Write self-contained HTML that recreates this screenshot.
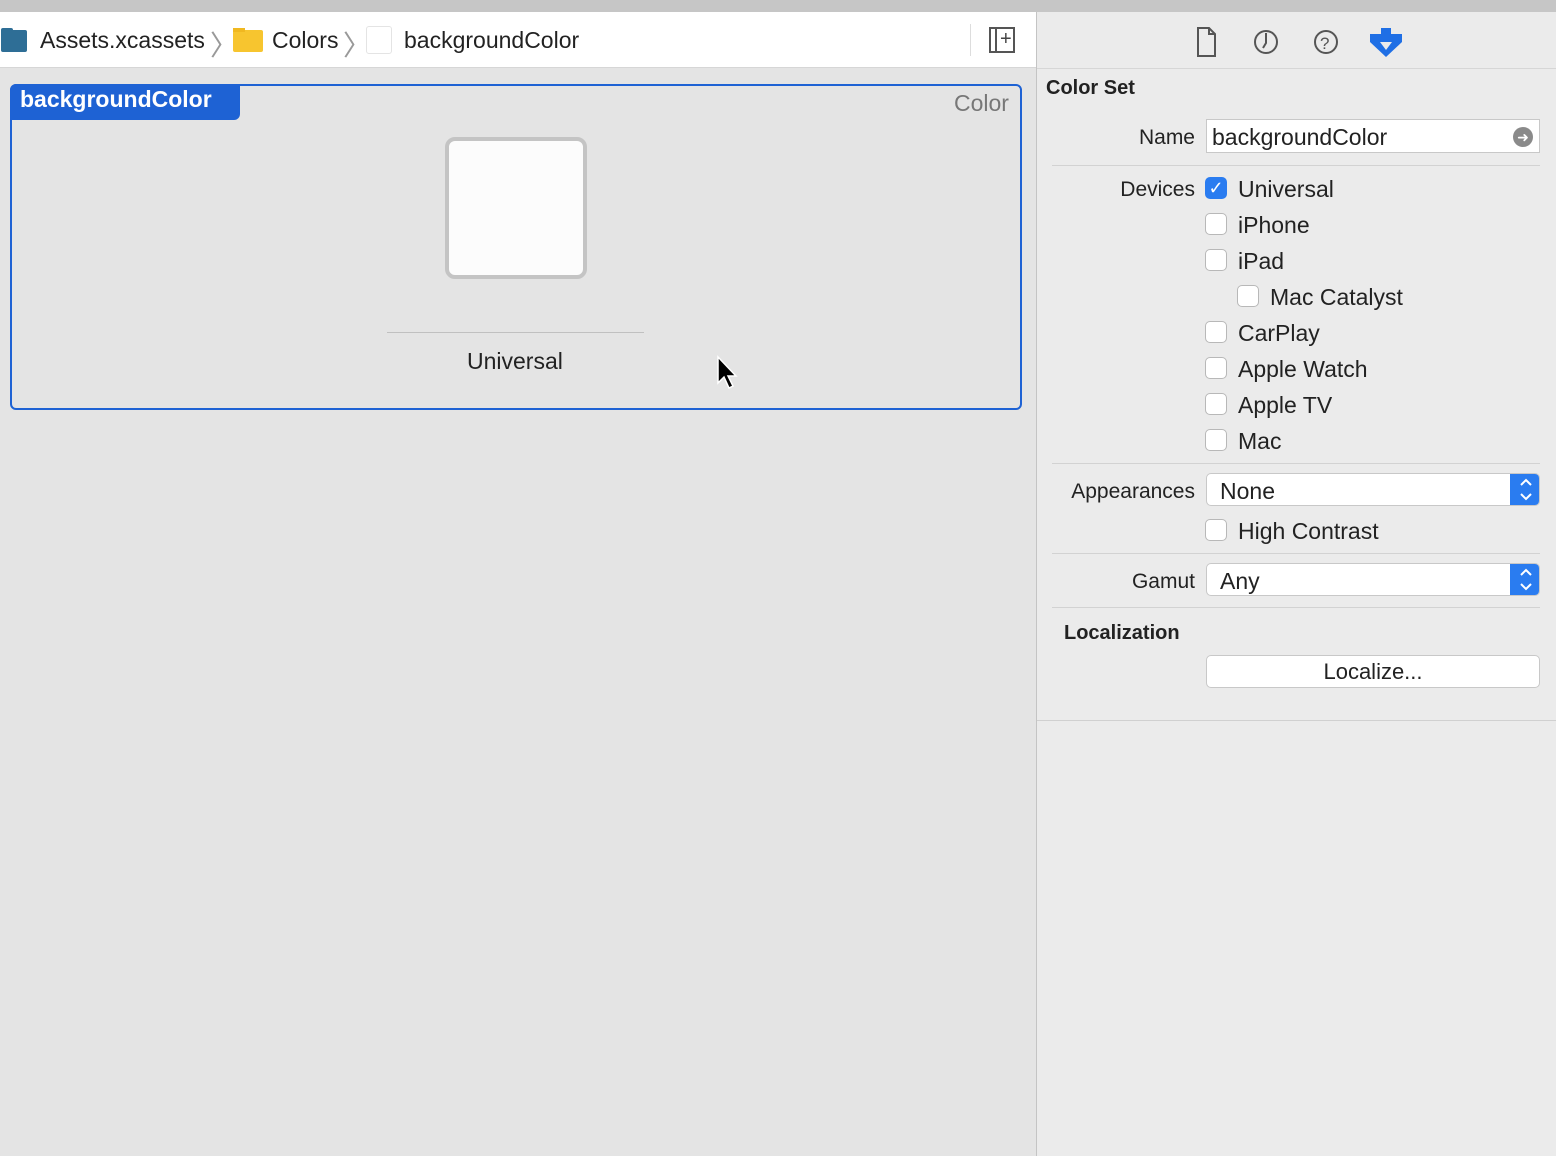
<!DOCTYPE html>
<html><head><style>
*{margin:0;padding:0;box-sizing:border-box}
body{width:1556px;height:1156px;overflow:hidden;background:#e4e4e4;font-family:"Liberation Sans",sans-serif;color:#222;position:relative}
.a{position:absolute}
.t{font-size:23px;white-space:nowrap}
.cb{position:absolute;width:22px;height:22px;border:1px solid #b8b8b8;border-radius:5px;background:#fff}
.lbl{position:absolute;font-size:21px;text-align:right;width:200px;white-space:nowrap}
.sep{position:absolute;left:1052px;width:488px;height:1px;background:#d2d2d2}
.pop{position:absolute;left:1206px;width:334px;height:33px;background:#fff;border:1px solid #c8c8c8;border-radius:5px;overflow:hidden}
.pop .arr{position:absolute;right:0;top:0;width:29px;height:100%;background:#2a7cf0}
</style></head><body>
<div class="a" style="left:0;top:0;width:1556px;height:12px;background:#c6c6c6"></div>
<div class="a" style="left:0;top:12px;width:1036px;height:56px;background:#fff;border-bottom:1px solid #d6d6d6"></div>
<div class="a" style="left:1036px;top:12px;width:1px;height:1144px;background:#c4c4c4"></div>
<div class="a" style="left:1037px;top:12px;width:519px;height:1144px;background:#ebebeb"></div>
<div class="a" style="left:1037px;top:68px;width:519px;height:1px;background:#d6d6d6"></div>
<!-- breadcrumb -->
<div class="a" style="left:1px;top:30px;width:26px;height:22px;background:#2e6e96;border-radius:2px"></div>
<div class="a" style="left:1px;top:28px;width:12px;height:4px;background:#2e6e96;border-radius:2px 2px 0 0"></div>
<div class="t a" style="left:40px;top:27px">Assets.xcassets</div>
<div class="a" style="left:210px;top:24px;font-size:28px;color:#999">〉</div>
<div class="a" style="left:233px;top:30px;width:30px;height:22px;background:#f7c52f;border-radius:2px"></div>
<div class="a" style="left:233px;top:28px;width:12px;height:4px;background:#f0b820"></div>
<div class="t a" style="left:272px;top:27px">Colors</div>
<div class="a" style="left:343px;top:24px;font-size:28px;color:#999">〉</div>
<div class="a" style="left:366px;top:26px;width:26px;height:28px;border:1px solid #e4e4e4;border-radius:3px;background:#fff"></div>
<div class="t a" style="left:404px;top:27px">backgroundColor</div>
<div class="a" style="left:970px;top:24px;width:1px;height:32px;background:#ddd"></div>
<div class="a" style="left:989px;top:27px;width:26px;height:26px;border:2px solid #555"></div>
<div class="a" style="left:995px;top:27px;width:2px;height:26px;background:#555"></div>
<div class="a" style="left:1000px;top:28px;font-size:20px;color:#444">+</div>
<!-- inspector icons -->
<svg class="a" style="left:1190px;top:24px" width="220" height="36">
<path d="M8 4h11l6 6v22H8z M19 4v6h6" fill="none" stroke="#555" stroke-width="2"/>
<circle cx="76" cy="18" r="11" fill="none" stroke="#555" stroke-width="2"/><path d="M76 9v10l-3 5" stroke="#555" stroke-width="2" fill="none"/>
<circle cx="136" cy="18" r="11" fill="none" stroke="#555" stroke-width="2"/><text x="130" y="25" font-size="17" fill="#555" font-family="Liberation Sans">?</text>
<path d="M191 4h10v6h11v8l-16 15-16-15v-8h11z" fill="#1f6fe5"/><path d="M190 18h12l-6 8z" fill="#ebebeb"/>
</svg>
<!-- card -->
<div class="a" style="left:10px;top:84px;width:1012px;height:326px;border:2px solid #1e62d4;border-radius:6px"></div>
<div class="a" style="left:10px;top:84px;width:230px;height:36px;background:#1e62d4;border-radius:6px 0 6px 0;color:#fff;font-weight:bold;font-size:23px;padding:2px 10px">backgroundColor</div>
<div class="t a" style="left:954px;top:90px;color:#777">Color</div>
<div class="a" style="left:445px;top:137px;width:142px;height:142px;border:4px solid #c4c4c4;border-radius:10px;background:#fcfcfc"></div>
<div class="a" style="left:387px;top:332px;width:257px;height:1px;background:#c0c0c0"></div>
<div class="t a" style="left:467px;top:348px">Universal</div>
<svg class="a" style="left:715px;top:355px" width="24" height="36"><path d="M3 2v26l6-6 5 11 4-2-5-10h8z" fill="#000" stroke="#fff" stroke-width="1.5"/></svg>
<!-- inspector -->
<div class="a" style="left:1046px;top:77px;font-size:20px;font-weight:bold">Color Set</div>
<div class="lbl" style="left:995px;top:126px">Name</div>
<div class="a" style="left:1206px;top:119px;width:334px;height:34px;background:#fff;border:1px solid #c8c8c8"></div>
<div class="t a" style="left:1212px;top:124px">backgroundColor</div>
<div class="a" style="left:1513px;top:127px;width:20px;height:20px;border-radius:50%;background:#8a8a8a;color:#fff;font-size:14px;text-align:center;line-height:20px">➜</div>
<div class="sep" style="top:165px"></div>
<div class="lbl" style="left:995px;top:178px">Devices</div>
<div class="cb" style="left:1205px;top:177px;background:#2a7cf0;border-color:#2a7cf0;color:#fff;font-size:18px;text-align:center;line-height:20px">✓</div>
<div class="t a" style="left:1238px;top:176px">Universal</div>
<div class="cb" style="left:1205px;top:213px"></div><div class="t a" style="left:1238px;top:212px">iPhone</div>
<div class="cb" style="left:1205px;top:249px"></div><div class="t a" style="left:1238px;top:248px">iPad</div>
<div class="cb" style="left:1237px;top:285px"></div><div class="t a" style="left:1270px;top:284px">Mac Catalyst</div>
<div class="cb" style="left:1205px;top:321px"></div><div class="t a" style="left:1238px;top:320px">CarPlay</div>
<div class="cb" style="left:1205px;top:357px"></div><div class="t a" style="left:1238px;top:356px">Apple Watch</div>
<div class="cb" style="left:1205px;top:393px"></div><div class="t a" style="left:1238px;top:392px">Apple TV</div>
<div class="cb" style="left:1205px;top:429px"></div><div class="t a" style="left:1238px;top:428px">Mac</div>
<div class="sep" style="top:463px"></div>
<div class="lbl" style="left:995px;top:480px">Appearances</div>
<div class="pop" style="top:473px"><div class="t a" style="left:13px;top:4px">None</div><div class="arr"></div></div>
<div class="cb" style="left:1205px;top:519px"></div><div class="t a" style="left:1238px;top:518px">High Contrast</div>
<div class="sep" style="top:553px"></div>
<div class="lbl" style="left:995px;top:570px">Gamut</div>
<div class="pop" style="top:563px"><div class="t a" style="left:13px;top:4px">Any</div><div class="arr"></div></div>
<div class="sep" style="top:607px"></div>
<div class="a" style="left:1064px;top:622px;font-size:20px;font-weight:bold">Localization</div>
<div class="a" style="left:1206px;top:655px;width:334px;height:33px;background:#fff;border:1px solid #c8c8c8;border-radius:5px;text-align:center;font-size:22px;line-height:31px">Localize...</div>
<div class="a" style="left:1037px;top:720px;width:519px;height:1px;background:#d0d0d0"></div>
<svg class="a" style="left:1512px;top:474px" width="28" height="130">
<path d="M9 11l5-5 5 5M9 20l5 5 5-5" fill="none" stroke="#fff" stroke-width="2"/>
<path d="M9 101l5-5 5 5M9 110l5 5 5-5" fill="none" stroke="#fff" stroke-width="2"/>
</svg>
</body></html>
